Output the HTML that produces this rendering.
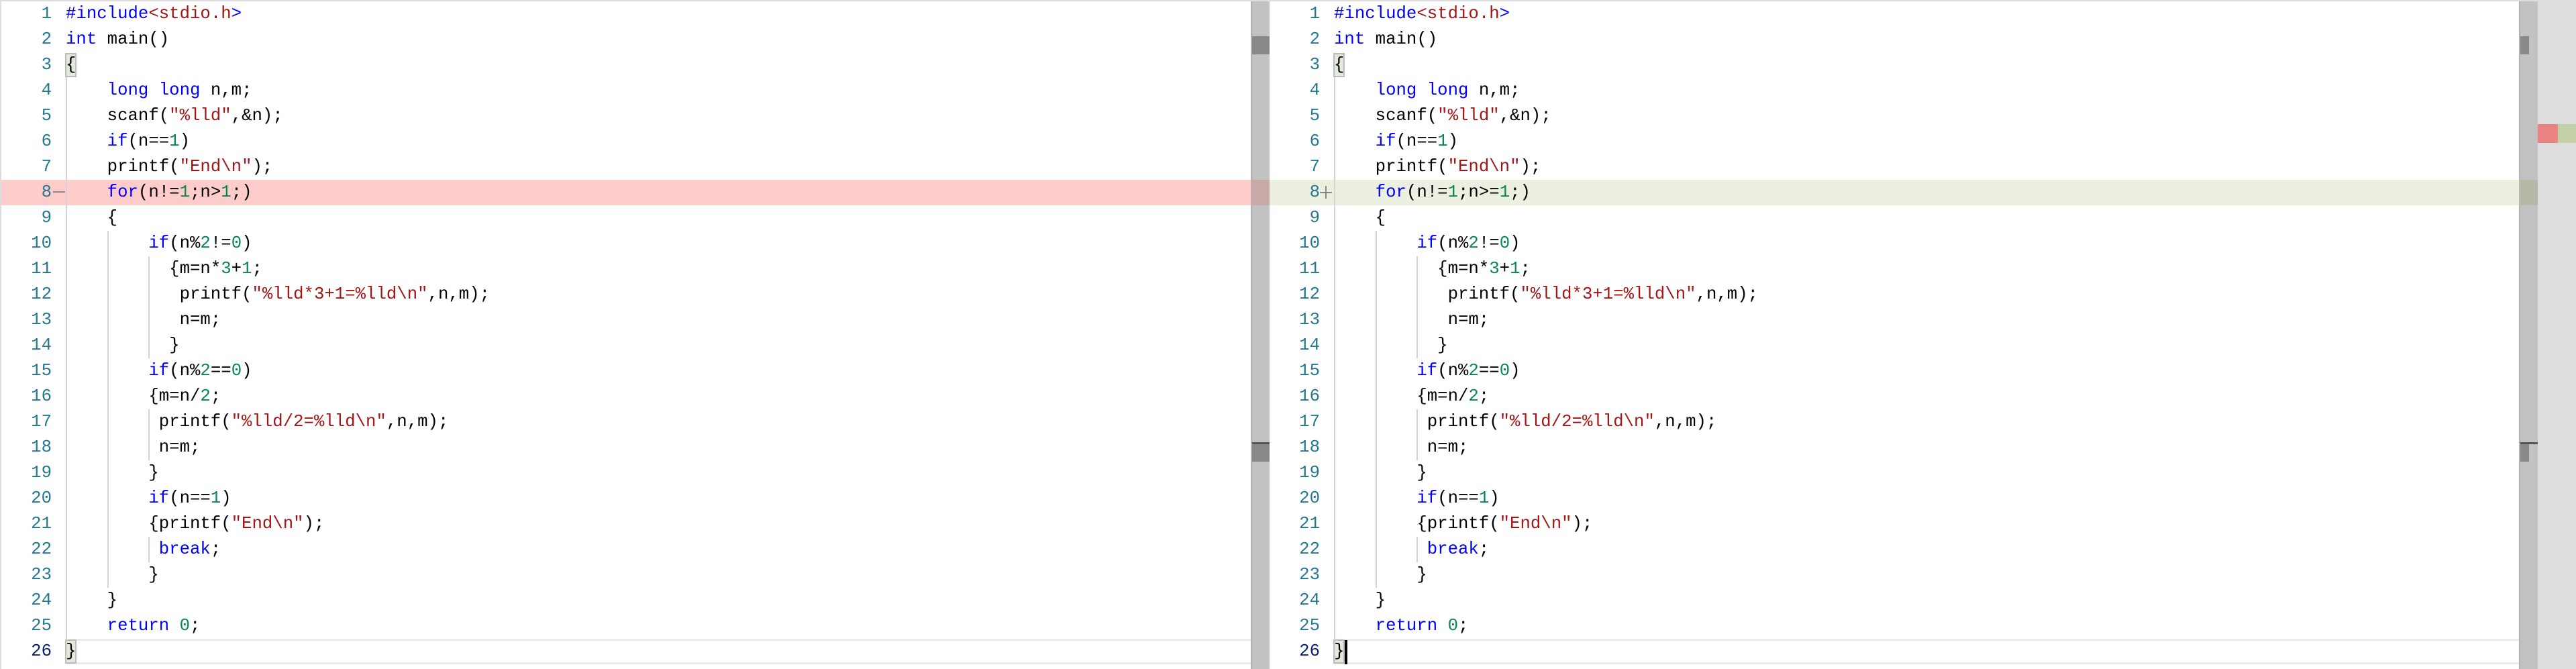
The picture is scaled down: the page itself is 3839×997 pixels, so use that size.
<!DOCTYPE html>
<html><head><meta charset="utf-8"><style>
*{margin:0;padding:0;box-sizing:border-box}
body{width:3839px;height:997px;position:relative;overflow:hidden;background:#fff;font-family:"Liberation Mono",monospace;font-size:25.7px}
.a{position:absolute}
.ln{position:absolute;width:60px;text-align:right;color:#237893;line-height:38px;height:38px}
.cl{position:absolute;white-space:pre;line-height:38px;height:38px;color:#000}
.k{color:#0000ff}.s{color:#a31515}.n{color:#098658}
.g{position:absolute;width:2px;background:#d3d3d3}
</style></head><body>
<div class="a" style="left:0;top:0;width:3839px;height:2px;background:#ddd"></div>
<div class="a" style="left:0;top:0;width:2px;height:997px;background:#ddd"></div>

<!-- left pane -->
<div class="a" style="left:2px;top:268px;width:1862px;height:38px;background:#ffcccc"></div>
<div class="a" style="left:98px;top:952px;width:1766px;height:3px;background:#eaeaea"></div>
<div class="a" style="left:98px;top:987px;width:1766px;height:3px;background:#eaeaea"></div>
<div class="a" style="left:1864px;top:2px;width:28px;height:995px;background:#c2c2c2;border-left:2px solid #b0b0b0"></div>
<div class="a" style="left:1864px;top:268px;width:28px;height:38px;background:#c9a8a8"></div>
<div class="a" style="left:1866px;top:54px;width:26px;height:27px;background:#898989"></div>
<div class="a" style="left:1866px;top:659px;width:26px;height:3px;background:#555"></div>
<div class="a" style="left:1866px;top:662px;width:26px;height:26px;background:#898989"></div>

<!-- right pane -->
<div class="a" style="left:1892px;top:268px;width:1862px;height:38px;background:#ebf0e0"></div>
<div class="a" style="left:1988px;top:952px;width:1766px;height:3px;background:#eaeaea"></div>
<div class="a" style="left:1988px;top:987px;width:1766px;height:3px;background:#eaeaea"></div>
<div class="a" style="left:3754px;top:2px;width:28px;height:995px;background:#c2c2c2;border-left:2px solid #b0b0b0"></div>
<div class="a" style="left:3754px;top:268px;width:28px;height:38px;background:#b4b9a8"></div>
<div class="a" style="left:3756px;top:54px;width:13px;height:27px;background:#898989"></div>
<div class="a" style="left:3756px;top:659px;width:26px;height:3px;background:#555"></div>
<div class="a" style="left:3756px;top:662px;width:13px;height:26px;background:#898989"></div>
<div class="a" style="left:3782px;top:2px;width:57px;height:995px;background:#dddddd"></div>
<div class="a" style="left:3782px;top:185px;width:30px;height:28px;background:#ea8484"></div>
<div class="a" style="left:3812px;top:185px;width:27px;height:28px;background:#c4d1a8"></div>

<div id="L" class="a" style="left:0;top:0"></div>
<div id="R" class="a" style="left:1890px;top:0"></div>

<script>
var common=[
'<span class="k">#include</span><span class="s">&lt;stdio.h</span><span class="k">&gt;</span>',
'<span class="k">int</span> main()',
'{',
'    <span class="k">long</span> <span class="k">long</span> n,m;',
'    scanf(<span class="s">"%lld"</span>,&amp;n);',
'    <span class="k">if</span>(n==<span class="n">1</span>)',
'    printf(<span class="s">"End\\n"</span>);',
'',
'    {',
'        <span class="k">if</span>(n%<span class="n">2</span>!=<span class="n">0</span>)',
'          {m=n*<span class="n">3</span>+<span class="n">1</span>;',
'           printf(<span class="s">"%lld*3+1=%lld\\n"</span>,n,m);',
'           n=m;',
'          }',
'        <span class="k">if</span>(n%<span class="n">2</span>==<span class="n">0</span>)',
'        {m=n/<span class="n">2</span>;',
'         printf(<span class="s">"%lld/2=%lld\\n"</span>,n,m);',
'         n=m;',
'        }',
'        <span class="k">if</span>(n==<span class="n">1</span>)',
'        {printf(<span class="s">"End\\n"</span>);',
'         <span class="k">break</span>;',
'        }',
'    }',
'    <span class="k">return</span> <span class="n">0</span>;',
'}'];
function build(id,l8,mark){
 var h='';
 h+='<div class="g" style="left:98px;top:115px;height:837px"></div>';
 h+='<div class="g" style="left:160px;top:344px;height:532px"></div>';
 h+='<div class="g" style="left:221px;top:382px;height:152px"></div>';
 h+='<div class="g" style="left:221px;top:610px;height:76px"></div>';
 h+='<div class="g" style="left:221px;top:800px;height:38px"></div>';
 h+='<div class="a" style="left:97px;top:79px;width:17px;height:36px;background:#e3eadc;border:2px solid #bcbcbc"></div>';
 h+='<div class="a" style="left:97px;top:953px;width:17px;height:36px;background:#e3eadc;border:2px solid #bcbcbc"></div>';
 for(var i=0;i<26;i++){
  var t=2+38*i;
  var c=i==7?l8:common[i];
  h+='<div class="ln" style="left:17px;top:'+t+'px;'+(i==25?'color:#0b216f':'')+'">'+(i+1)+'</div>';
  h+='<div class="cl" style="left:98px;top:'+t+'px">'+c+'</div>';
 }
 h+=mark;
 document.getElementById(id).innerHTML=h;
}
build('L','    <span class="k">for</span>(n!=<span class="n">1</span>;n&gt;<span class="n">1</span>;)',
 '<div class="a" style="left:79px;top:285px;width:18px;height:2px;background:#888"></div>');
build('R','    <span class="k">for</span>(n!=<span class="n">1</span>;n&gt;=<span class="n">1</span>;)',
 '<div class="a" style="left:77px;top:286px;width:18px;height:2px;background:#888"></div><div class="a" style="left:85px;top:277px;width:2px;height:19px;background:#888"></div><div class="a" style="left:114px;top:954px;width:4px;height:36px;background:#000"></div>');
</script>
</body></html>
